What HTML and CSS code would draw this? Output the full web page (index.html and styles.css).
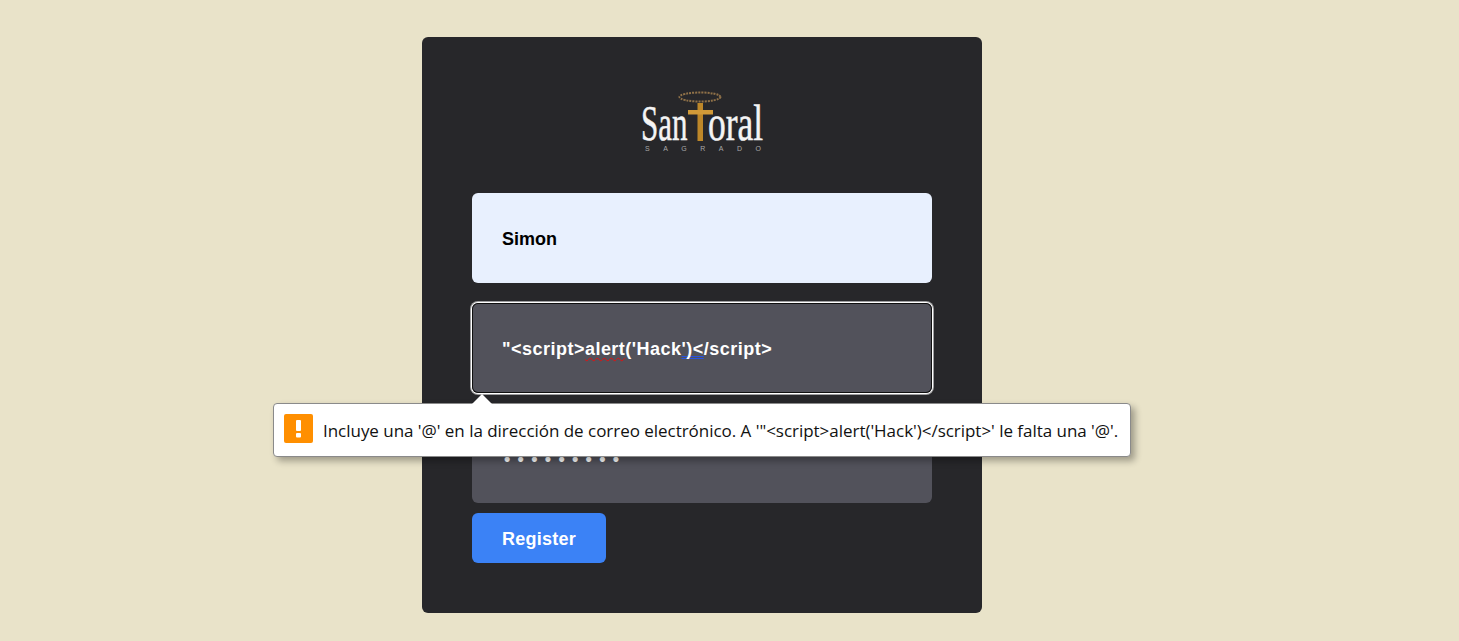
FILE: index.html
```html
<!DOCTYPE html>
<html lang="es">
<head>
  <meta charset="UTF-8">
  <meta name="viewport" content="width=device-width, initial-scale=1.0">
  <title>Santoral Sagrado - Registro</title>
  <link rel="stylesheet" href="styles.css">
</head>
<body>

  <main class="card">
    <div class="logo">
      <svg width="130" height="68" viewBox="0 0 130 68" aria-label="Santoral Sagrado">
        <ellipse cx="63" cy="10" rx="20.5" ry="4.5" fill="none" stroke="#8f7148" stroke-width="2" stroke-dasharray="2 1"/>
        <text class="logo-word" transform="translate(4 53) scale(0.62 1)">San</text>
        <rect x="60.5" y="16" width="5.5" height="38" fill="#bd8729"/>
        <rect x="51" y="23" width="25" height="4.5" fill="#d19a38"/>
        <text class="logo-word" transform="translate(71 53) scale(0.71 1)">oral</text>
        <text class="logo-sub" x="8" y="64" textLength="116">SAGRADO</text>
      </svg>
    </div>

    <form class="form">
      <input class="field field-filled" type="text" value="Simon">

      <div class="email-wrap">
        <div class="field field-focus" tabindex="0">"&lt;script&gt;<span class="spell">alert</span>('Hack<span class="grammar">')&lt;</span>/script&gt;</div>

        <!-- globo de validacion del navegador -->
        <div class="tooltip">
          <span class="tooltip-icon">
            <svg width="29" height="29" viewBox="0 0 29 29">
              <rect x="12" y="6" width="5" height="11" rx="1" fill="#fff"/>
              <rect x="12" y="19" width="5" height="4.5" rx="1" fill="#fff"/>
            </svg>
          </span>
          <span>Incluye una '@' en la dirección de correo electrónico. A '"&lt;script&gt;alert('Hack')&lt;/script&gt;' le falta una '@'.</span>
        </div>
      </div>

      <input class="field field-password" type="password" value="123456789">
      <button class="btn" type="button">Register</button>
    </form>
  </main>

</body>
</html>
```

FILE: styles.css
```css
body {
  margin: 0;
  height: 641px;
  overflow: hidden;
  background: #e9e3c9;
  font-family: "Liberation Sans", Arial, sans-serif;
}
.card {
  box-sizing: border-box;
  width: 560px;
  height: 576px;
  margin: 37px 0 0 422px;
  padding: 50px;
  background: #27272a;
  border-radius: 6px;
}
.logo {
  display: flex;
  justify-content: center;
  height: 68px;
  margin-bottom: 38px;
}
.logo svg {
  display: block;
}
.logo-word {
  font-family: "Liberation Serif", serif;
  font-size: 50px;
  fill: #f4f4f4;
  stroke: #f4f4f4;
  stroke-width: 0.5;
}
.logo-sub {
  font-family: "Liberation Sans", sans-serif;
  font-size: 7px;
  fill: #a8a8a8;
}
.form {
  display: flex;
  flex-direction: column;
  align-items: flex-start;
}
.field {
  box-sizing: border-box;
  display: block;
  width: 460px;
  height: 90px;
  margin-bottom: 20px;
  padding: 2px 30px 0;
  border: none;
  border-radius: 6px;
  outline: none;
  background: #52525b;
  color: #fff;
  font-family: "Liberation Sans", Arial, sans-serif;
  font-size: 18px;
  font-weight: bold;
  line-height: 88px;
}
.field-filled {
  background: #e8f0fe;
  color: #000;
}
.field-focus {
  letter-spacing: 0.48px;
  box-shadow: inset 0 0 0 1px #101010, 0 0 0 1px #fff, 0 0 0 2px rgba(255, 255, 255, 0.55);
}
.field-password {
  margin-bottom: 10px;
  padding-left: 32px;
  letter-spacing: 7.3px;
  color: #fff;
}
.email-wrap {
  position: relative;
}
.spell {
  text-decoration: underline wavy #e01010;
  text-decoration-thickness: 1px;
  text-decoration-skip-ink: none;
  text-underline-offset: 2px;
}
.grammar {
  text-decoration: underline double #2a52e0;
  text-decoration-thickness: 1px;
  text-decoration-skip-ink: none;
  text-underline-offset: 1px;
}
.tooltip {
  position: absolute;
  top: 100px;
  left: -199px;
  z-index: 10;
  display: flex;
  align-items: center;
  gap: 10px;
  box-sizing: border-box;
  width: 858px;
  height: 54px;
  padding: 0 10px;
  background: #fff;
  border: 1px solid #8a8a8a;
  border-radius: 4px;
  box-shadow: 4px 4px 7px rgba(0, 0, 0, 0.32);
  color: #111;
  font-family: "Open Sans", sans-serif;
  font-size: 17px;
  letter-spacing: -0.03px;
  white-space: nowrap;
}
.tooltip::before {
  content: "";
  position: absolute;
  top: -10px;
  left: 198px;
  border-left: 10px solid transparent;
  border-right: 10px solid transparent;
  border-bottom: 10px solid #fff;
}
.tooltip-icon {
  flex: none;
  width: 29px;
  height: 29px;
  margin-top: -3px;
  background: #ff8f00;
  border-radius: 2px;
}
.tooltip-icon svg {
  display: block;
}
.btn {
  width: 134px;
  height: 50px;
  padding: 2px 0 0;
  border: none;
  border-radius: 6px;
  background: #3b82f6;
  color: #fff;
  font-family: "Liberation Sans", Arial, sans-serif;
  font-size: 18px;
  font-weight: bold;
  letter-spacing: 0.25px;
}
```
